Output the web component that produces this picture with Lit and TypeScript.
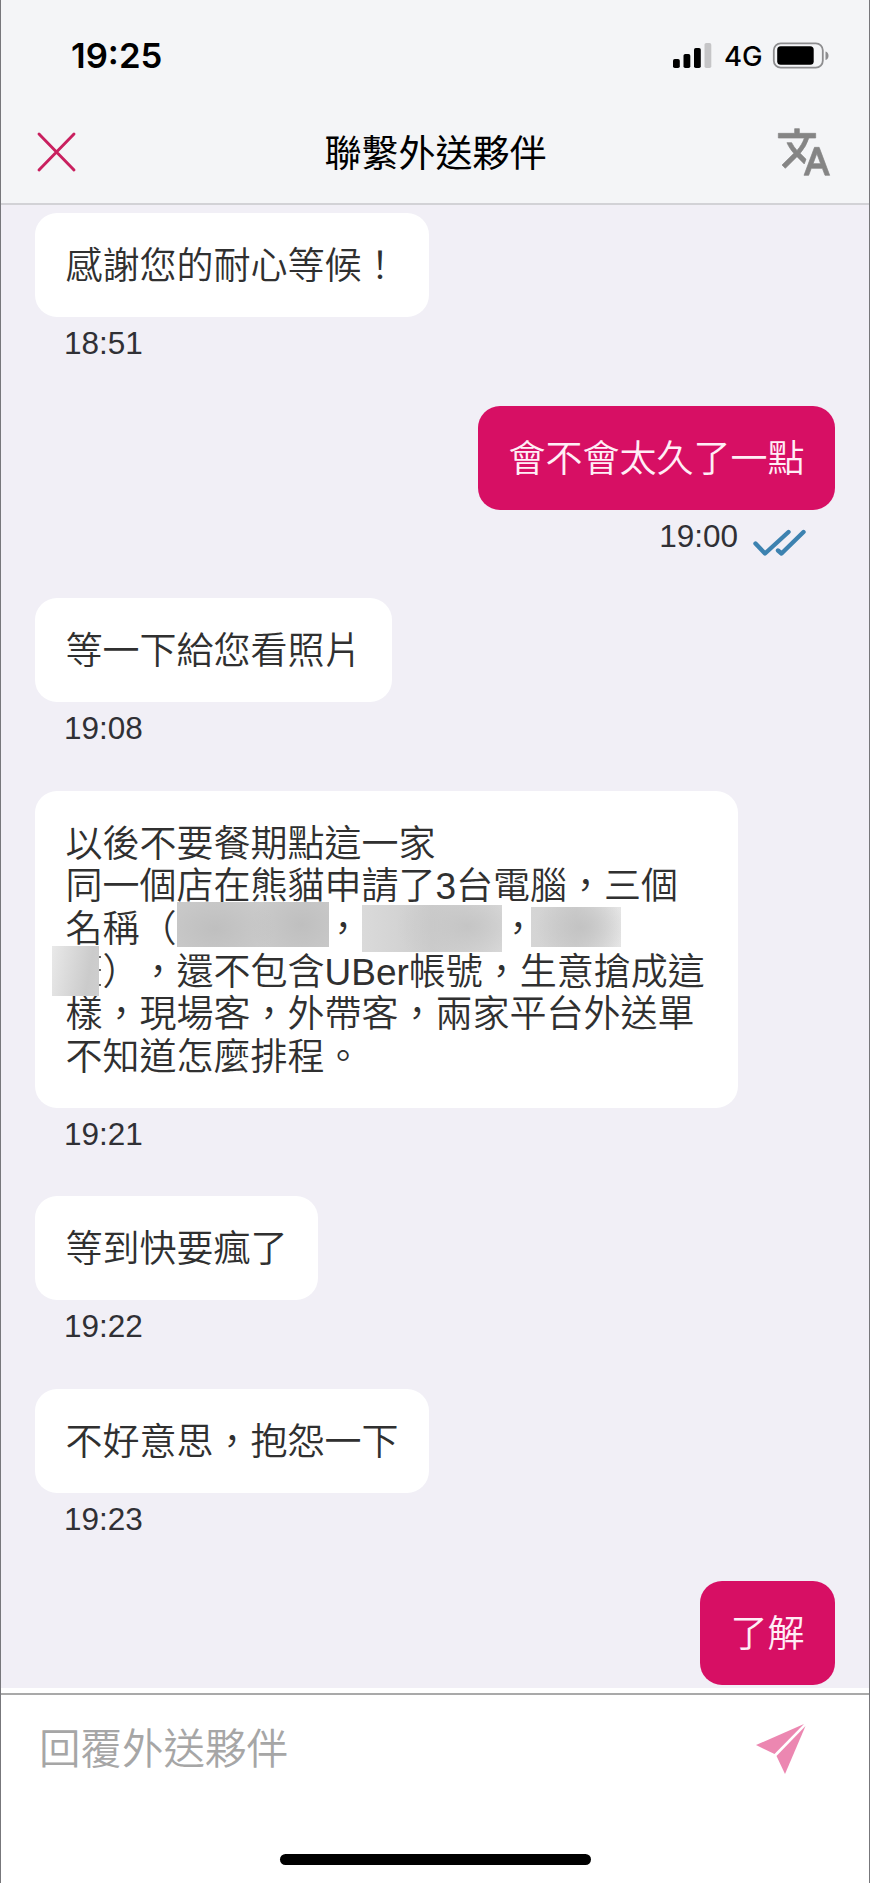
import { LitElement, html, css, svg, nothing } from "lit";
import { customElement, property } from "lit/decorators.js";

type Part = string | { mask: string };

interface Message {
  own?: boolean;
  read?: boolean;
  time?: string;
  lines: Part[][];
}

const messages: Message[] = [
  { time: "18:51", lines: [["感謝您的耐心等候！"]] },
  { own: true, read: true, time: "19:00", lines: [["會不會太久了一點"]] },
  { time: "19:08", lines: [["等一下給您看照片"]] },
  {
    time: "19:21",
    lines: [
      ["以後不要餐期點這一家"],
      ["同一個店在熊貓申請了3台電腦，三個"],
      ["名稱（", { mask: "a" }, "，", { mask: "b" }, "，", { mask: "c" }],
      [{ mask: "d" }, "），還不包含UBer帳號，生意搶成這"],
      ["樣，現場客，外帶客，兩家平台外送單"],
      ["不知道怎麼排程。"],
    ],
  },
  { time: "19:22", lines: [["等到快要瘋了"]] },
  { time: "19:23", lines: [["不好意思，抱怨一下"]] },
  { own: true, lines: [["了解"]] },
];

@customElement("chat-message")
class ChatMessage extends LitElement {
  @property({ attribute: false }) message!: Message;

  static styles = css`
    :host { display: flex; flex-direction: column; align-items: flex-start; flex: none; }
    :host([own]) { align-items: flex-end; }
    .bubble {
      padding: 33.2px 30.5px 28.2px;
      border-radius: 22px;
      background: #fff;
      color: #303030;
      font-size: 37px;
      font-weight: 350;
      line-height: 42.65px;
      box-sizing: border-box;
      text-spacing-trim: space-all;
    }
    .bubble.long { padding-right: 33px; }
    :host([own]) .bubble { background: #d70f64; color: #ffeef6; }
    .line { display: flex; height: 42.65px; white-space: pre; }
    .meta {
      display: flex;
      height: 88.5px;
      box-sizing: border-box;
      padding: 8px 28px 0 29px;
      color: #303035;
      font-size: 31.5px;
      line-height: 36px;
    }
    .ticks { width: 56px; height: 30px; margin: 10px 0 0 13px; }
    .mask { position: relative; height: 42px; }
    .mask::before { content: ""; position: absolute; }
    .mask.a { width: 148px; }
    .mask.a::before {
      left: 0; top: -7px; width: 152px; height: 45px;
      background: radial-gradient(ellipse 60px 40px at 25% 60%, #bfbfbf, transparent),
        radial-gradient(ellipse 50px 45px at 82% 50%, #bfbfbf, transparent), #cbcbcb;
    }
    .mask.b { width: 138px; }
    .mask.b::before {
      left: 0; top: -4px; width: 140px; height: 47px;
      background: radial-gradient(ellipse 70px 45px at 75% 45%, #c5c5c5, transparent),
        linear-gradient(90deg, #dadada, #cdcdcd 50%, #dedede);
    }
    .mask.c { width: 85px; }
    .mask.c::before {
      left: -6px; top: -2px; width: 90px; height: 40px;
      background: radial-gradient(ellipse 45px 35px at 55% 50%, #c3c3c3, transparent),
        linear-gradient(90deg, #d5d5d5, #cfcfcf 50%, #e5e5e5);
    }
    .mask.d { width: 37px; }
    .mask.d::before {
      left: -14px; top: -6px; width: 47px; height: 50px;
      background: linear-gradient(100deg, #e9e9e9, #cbcbcb 75%, #cecece);
    }
    .mask.d::after {
      content: ""; position: absolute; left: 33px; top: 4px; width: 2px; height: 30px;
      background: linear-gradient(#666 2px, transparent 2px 13px, #666 13px 15px, transparent 15px 28px, #666 28px);
    }
  `;

  render() {
    const m = this.message;
    return html`
      <div class="bubble ${m.lines.length > 1 ? "long" : ""}">
        ${m.lines.map(
          (line) => html`<div class="line">${line.map((p) =>
            typeof p === "string" ? html`<span>${p}</span>` : html`<span class="mask ${p.mask}"></span>`
          )}</div>`
        )}
      </div>
      ${m.time
        ? html`<div class="meta">
            <span>${m.time}</span>
            ${m.read
              ? html`<svg class="ticks" viewBox="0 0 56 30" fill="none" stroke="#3d82b0" stroke-width="4.400" stroke-linecap="round" stroke-linejoin="round">
                  <path d="M4.500 15.500 14 25.500 37.500 4M27 22.500 30.500 25.500 52.500 4" />
                </svg>`
              : nothing}
          </div>`
        : nothing}
    `;
  }
}

@customElement("app-root")
class AppRoot extends LitElement {
  static styles = css`
    :host {
      display: flex;
      flex-direction: column;
      box-sizing: border-box;
      width: 870px;
      height: 1883px;
      overflow: hidden;
      border: solid #77777b;
      border-width: 0 1px;
      background: #fff;
      font-family: "Liberation Sans", "Noto Sans CJK TC", sans-serif;
    }
    .top {
      flex: none;
      height: 205px;
      box-sizing: border-box;
      border-bottom: 2px solid #d2d2d6;
      background: #f4f5f7;
    }
    .status {
      display: flex;
      align-items: center;
      justify-content: space-between;
      height: 111px;
      padding: 0 39px 0 70px;
      font-family: Inter, sans-serif;
      color: #000;
    }
    .clock { padding-bottom: 2px; font-size: 34.7px; font-weight: 600; }
    .signals { display: flex; align-items: center; }
    .bars { width: 39px; height: 26px; margin-right: 12px; }
    .net { font-size: 27.5px; font-weight: 500; line-height: 26px; width: 37px; margin-right: 11px; padding-top: 1px; }
    .battery { width: 58px; height: 28px; }
    .nav {
      display: grid;
      grid-template-columns: 60px 1fr 60px;
      align-items: center;
      height: 84px;
      padding: 0 37px 0 34px;
    }
    .title { margin: 0; padding: 3px 0 0 4px; text-align: center; font-size: 37px; font-weight: 400; line-height: 44px; color: #000; }
    .close { width: 42px; height: 42px; margin-bottom: 2px; }
    .translate { width: 56px; height: 56px; justify-self: end; margin-bottom: 2px; }
    .feed {
      flex: none;
      height: 1483px;
      box-sizing: border-box;
      padding: 8px 34px 0;
      background: #f1eff6;
      overflow: hidden;
    }
    .composer {
      flex: 1;
      display: flex;
      flex-direction: column;
      align-items: center;
      padding-top: 5px;
    }
    .row {
      display: flex;
      align-items: center;
      justify-content: space-between;
      align-self: stretch;
      height: 108px;
      padding: 0 62px 0 38px;
      border-top: 2px solid #a9a9a9;
    }
    .placeholder { padding-top: 2px; color: #a6a6a6; font-size: 41.5px; font-weight: 350; line-height: 50px; }
    .send { width: 52px; height: 52px; }
    .home { width: 311px; height: 11px; margin-top: 51px; border-radius: 6px; background: #000; }
  `;

  render() {
    const bars = [[0, 16, 9], [10.500, 11, 14], [21, 5, 20], [31.500, 0, 25]];
    return html`
      <header class="top">
        <div class="status">
          <span class="clock">19:25</span>
          <div class="signals">
            <svg class="bars" viewBox="0 0 39 26">
              ${bars.map(([x, y, h], i) => svg`<rect x=${x} y=${y} width="6.800" height=${h} rx="1.800" fill=${i === 3 ? "#c5c5c7" : "#000"} />`)}
            </svg>
            <span class="net">4G</span>
            <svg class="battery" viewBox="0 0 58 28">
              <rect x="1.800" y="1.300" width="49" height="24.400" rx="7" fill="none" stroke="#8d8d8f" stroke-width="1.800" />
              <rect x="5.200" y="4.300" width="36.500" height="18.400" rx="3.500" />
              <path d="M53.500 9.500v8.500c4-1 4-7.500 0-8.500Z" fill="#8d8d8f" />
            </svg>
          </div>
        </div>
        <div class="nav">
          <svg class="close" viewBox="0 0 42 42" stroke="#c9205f" stroke-width="2.900" stroke-linecap="round">
            <path d="M4 3 39 39M39 3 4 39" />
          </svg>
          <h1 class="title">聯繫外送夥伴</h1>
          <svg class="translate" viewBox="0 0 24 24" fill="#858585" stroke="#858585" stroke-width="0.300">
            <path d="M12.870 15.070l-2.540-2.510.030-.030A17.520 17.520 0 0 0 14.070 6H17V4h-7V2H8v2H1v2h11.170C11.500 7.920 10.440 9.750 9 11.350 8.070 10.320 7.300 9.190 6.690 8h-2c.73 1.630 1.730 3.170 2.980 4.560l-5.090 5.020L4 19l5-5 3.110 3.110.76-2.040zM18.500 10h-2L12 22h2l1.120-3h4.750L21 22h2l-4.500-12zm-2.620 7l1.620-4.330L19.120 17h-3.240z" />
          </svg>
        </div>
      </header>
      <main class="feed">
        ${messages.map((m) => html`<chat-message ?own=${m.own} .message=${m}></chat-message>`)}
      </main>
      <footer class="composer">
        <div class="row">
          <span class="placeholder">回覆外送夥伴</span>
          <svg class="send" viewBox="0 0 52 52" fill="#ec87b1">
            <path d="M1 22 49 1 19.500 31Z" />
            <path d="M50.500 3 21.500 33 30 51Z" />
          </svg>
        </div>
        <div class="home"></div>
      </footer>
    `;
  }
}
